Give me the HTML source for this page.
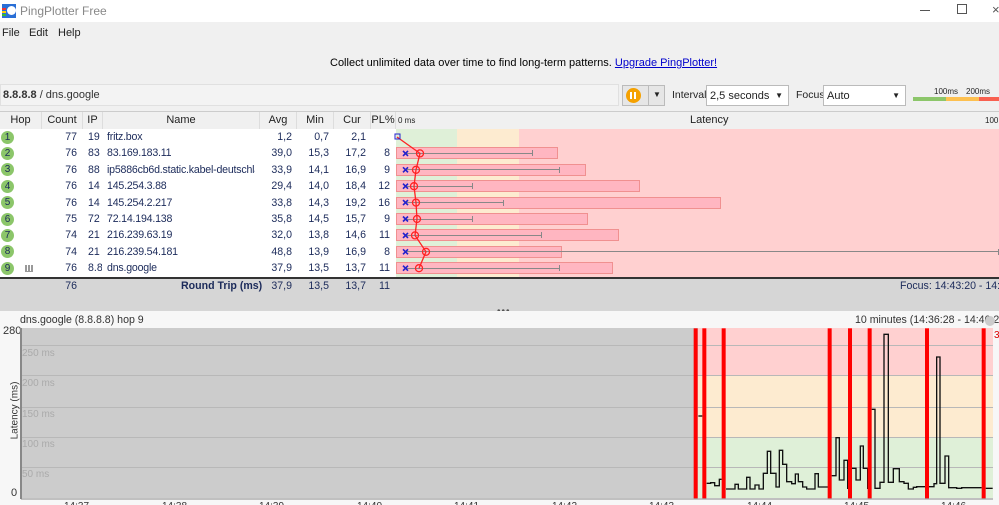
<!DOCTYPE html>
<html><head><meta charset="utf-8"><style>
*{margin:0;padding:0;box-sizing:border-box}
body{width:999px;height:505px;overflow:hidden;background:#f0f0f0;font-family:"Liberation Sans",sans-serif;font-size:11px;color:#222;position:relative;white-space:nowrap}
.a{position:absolute}
.num{text-align:right}
.hdr{top:112px;height:17px;background:#f0f0f0;border-right:1px solid #ddd;text-align:center;line-height:17px;color:#222}
.c{position:absolute;height:16px;line-height:16px;color:#1b2a5a;font-size:10.6px}
.hopc{position:absolute;left:1px;width:13px;height:13px;border-radius:50%;background:#8cc66a;color:#1b2a5a;font-size:10px;text-align:center;line-height:13px}
</style></head><body>
<div class="a" style="left:0;top:0;width:999px;height:22px;background:#fff"></div>
<div class="a" style="left:2px;top:4px;width:14px;height:14px;background:#2a6fd6"><div class="a" style="left:5px;top:2px;width:9px;height:9px;border-radius:50%;background:#fff"></div><div class="a" style="left:0;top:4px;width:4px;height:2px;background:#e33"></div><div class="a" style="left:0;top:7px;width:4px;height:2px;background:#fc0"></div><div class="a" style="left:0;top:10px;width:4px;height:2px;background:#3b3"></div></div>
<div class="a" style="left:20px;top:4px;font-size:12px;color:#888">PingPlotter Free</div>
<div class="a" style="left:920px;top:10px;width:10px;height:1px;background:#555"></div>
<div class="a" style="left:957px;top:4px;width:10px;height:10px;border:1px solid #555"></div>
<div class="a" style="left:992px;top:2px;font-size:13px;color:#555">×</div>
<div class="a" style="left:2px;top:27px">File</div><div class="a" style="left:29px;top:27px">Edit</div><div class="a" style="left:58px;top:27px">Help</div>
<div class="a" style="left:330px;top:57px;font-size:11px;color:#000">Collect unlimited data over time to find long-term patterns. <span style="color:#00c;text-decoration:underline">Upgrade PingPlotter!</span></div>
<div class="a" style="left:0;top:84px;width:619px;height:22px;background:#f3f3f3;border:1px solid #e0e0e0"></div>
<div class="a" style="left:3px;top:89px;color:#333"><b>8.8.8.8</b> / dns.google</div>
<div class="a" style="left:622px;top:85px;width:43px;height:21px;background:#e6e6e6;border:1px solid #bbb"></div>
<div class="a" style="left:626px;top:88px;width:15px;height:15px;border-radius:50%;background:#f5a100"><div class="a" style="left:4px;top:4px;width:2px;height:7px;background:#fff"></div><div class="a" style="left:8px;top:4px;width:2px;height:7px;background:#fff"></div></div>
<div class="a" style="left:648px;top:85px;width:1px;height:21px;background:#bbb"></div>
<div class="a" style="left:653px;top:90px;font-size:8px">▼</div>
<div class="a" style="left:672px;top:89px;font-size:10.5px">Interval</div>
<div class="a" style="left:706px;top:85px;width:83px;height:21px;background:#fff;border:1px solid #bbb;padding:4px 3px">2,5 seconds<span style="position:absolute;right:5px;top:5px;font-size:8px">▼</span></div>
<div class="a" style="left:796px;top:89px;font-size:10.5px">Focus</div>
<div class="a" style="left:823px;top:85px;width:83px;height:21px;background:#fff;border:1px solid #bbb;padding:4px 3px">Auto<span style="position:absolute;right:5px;top:5px;font-size:8px">▼</span></div>
<div class="a" style="left:934px;top:87px;font-size:8px">100ms</div><div class="a" style="left:966px;top:87px;font-size:8px">200ms</div>
<div class="a" style="left:913px;top:97px;width:33px;height:4px;background:#8cc66a"></div><div class="a" style="left:946px;top:97px;width:33px;height:4px;background:#fdc050"></div><div class="a" style="left:979px;top:97px;width:20px;height:4px;background:#f86050"></div>
<div class="a" style="left:0;top:111px;width:999px;height:1px;background:#ccc"></div>
<div class="a hdr" style="left:0;width:42px">Hop</div>
<div class="a hdr" style="left:42px;width:41px">Count</div>
<div class="a hdr" style="left:83px;width:20px">IP</div>
<div class="a hdr" style="left:103px;width:157px">Name</div>
<div class="a hdr" style="left:260px;width:37px">Avg</div>
<div class="a hdr" style="left:297px;width:37px">Min</div>
<div class="a hdr" style="left:334px;width:37px">Cur</div>
<div class="a hdr" style="left:371px;width:25px">PL%</div>
<div class="a" style="left:396px;top:112px;width:603px;height:17px;background:#f0f0f0"></div>
<div class="a" style="left:398px;top:116px;font-size:8px">0 ms</div>
<div class="a" style="left:690px;top:114px">Latency</div>
<div class="a" style="left:985px;top:116px;font-size:8px">100</div>
<div class="a" style="left:0;top:129px;width:396px;height:148px;background:#fff"></div>
<div class="a" style="left:396px;top:129px;width:61px;height:148px;background:#dff0d8"></div>
<div class="a" style="left:457px;top:129px;width:62px;height:148px;background:#fdebd0"></div>
<div class="a" style="left:519px;top:129px;width:480px;height:148px;background:#ffd0d0"></div>
<div id="rows"></div>
<div class="a" style="left:0;top:277px;width:999px;height:2px;background:#333"></div>
<div class="a" style="left:0;top:279px;width:999px;height:32px;background:#d6d6d6"></div>
<div class="a" style="left:0;top:279px;width:999px;height:16px;color:#1b2a5a;line-height:14px;font-size:10.6px">
<span class="a num" style="left:42px;width:35px">76</span>
<span class="a" style="left:181px;font-weight:bold">Round Trip (ms)</span>
<span class="a num" style="left:260px;width:32px">37,9</span><span class="a num" style="left:297px;width:32px">13,5</span><span class="a num" style="left:334px;width:32px">13,7</span><span class="a num" style="left:371px;width:19px">11</span>
<span class="a" style="left:900px">Focus: 14:43:20 - 14:46</span></div>
<div class="a" style="left:497px;top:306px;font-size:10px;color:#555;letter-spacing:1px">•••</div>
<div class="a" style="left:0;top:311px;width:999px;height:194px;background:#f7f7f7"></div>
<div class="a" style="left:20px;top:314px;color:#333;font-size:10.6px">dns.google (8.8.8.8) hop 9</div>
<div class="a" style="left:855px;top:314px;color:#333;font-size:10.6px">10 minutes (14:36:28 - 14:46:28)</div>
<div class="a" style="left:985px;top:316px;width:10px;height:10px;border-radius:50%;background:#ccc"></div>
<div class="a" style="left:3px;top:325px;color:#333">280</div>
<div class="a" style="left:11px;top:487px;color:#333">0</div>
<div class="a" style="left:-14px;top:405px;transform:rotate(-90deg);color:#333;font-size:10px">Latency (ms)</div>
<svg class="a" style="left:0;top:311px" width="999" height="194">
<rect x="21" y="17" width="677" height="170" fill="#cccccc"/>
<rect x="698" y="17" width="295" height="48" fill="#ffd0d0"/>
<rect x="698" y="65" width="295" height="61" fill="#fdebd0"/>
<rect x="698" y="126" width="295" height="61" fill="#dff0d8"/>
<g stroke="#b8b8b8" stroke-width="1"><line x1="21" y1="34.5" x2="993" y2="34.5"/><line x1="21" y1="64.5" x2="993" y2="64.5"/><line x1="21" y1="96.5" x2="993" y2="96.5"/><line x1="21" y1="126.5" x2="993" y2="126.5"/><line x1="21" y1="156.5" x2="993" y2="156.5"/></g>
<line x1="21" y1="17" x2="21" y2="188" stroke="#888" stroke-width="2"/>
<line x1="21" y1="188" x2="993" y2="188" stroke="#888"/>
<g font-size="10" fill="#aaa" font-family="Liberation Sans"><text x="22" y="45">250 ms</text><text x="22" y="75">200 ms</text><text x="22" y="106">150 ms</text><text x="22" y="136">100 ms</text><text x="22" y="166">50 ms</text></g>
<g font-size="10" fill="#333" font-family="Liberation Sans"><text x="64" y="198">14:37</text><text x="162" y="198">14:38</text><text x="259" y="198">14:39</text><text x="357" y="198">14:40</text><text x="454" y="198">14:41</text><text x="552" y="198">14:42</text><text x="649" y="198">14:43</text><text x="747" y="198">14:44</text><text x="844" y="198">14:45</text><text x="941" y="198">14:46</text></g>
<g fill="#d00" font-size="10"><text x="994" y="27">3</text></g>
<svg x="680" y="-1" width="319" height="195" viewBox="0 0 957 585">
<g fill="none" stroke="#111" stroke-width="4">
<path d="M55 318H67"/>
<path d="M80 520H92V518H104V527H118V508H125"/>
<path d="M138 537H165V523H175V537H200V502H210V537H225V525H237V537H250V490H262V424H272V490H288V531H298V421H308V463H320V515H335V521H346V492H355V515H368V531H380V537H405V491H415V531H444"/>
<path d="M455 497H468V383H478V510H492V451H503V537"/>
<path d="M515 475H528V510H541V408H550V475H563V537"/>
<path d="M575 298H585V535H600V517H612V73H625V517H640V476H658V515H672V520H685V537H700V532H710V530H735"/>
<path d="M747 530H762V521H770V141H780V520H795V438H806V533H830V535H845V533H905"/>
<path d="M917 535H938"/>
</g>
<g fill="#f00"><rect x="41" y="55" width="12" height="510"/><rect x="67" y="55" width="12" height="510"/><rect x="125" y="55" width="12" height="510"/><rect x="443" y="55" width="12" height="510"/><rect x="504" y="55" width="12" height="510"/><rect x="563" y="55" width="12" height="510"/><rect x="735" y="55" width="12" height="510"/><rect x="905" y="55" width="12" height="510"/></g>
</svg>
</svg>
<script>
var d=[[77,19,"fritz.box","1,2","0,7","2,1","",0,0,0],[76,83,"83.169.183.11","39,0","15,3","17,2","8",558,420,533],[76,88,"ip5886cb6d.static.kabel-deutschla","33,9","14,1","16,9","9",586,416,560],[76,14,"145.254.3.88","29,4","14,0","18,4","12",640,414,473],[76,14,"145.254.2.217","33,8","14,3","19,2","16",721,416,504],[75,72,"72.14.194.138","35,8","14,5","15,7","9",588,417,473],[74,21,"216.239.63.19","32,0","13,8","14,6","11",619,415,542],[74,21,"216.239.54.181","48,8","13,9","16,9","8",562,426,999],[76,"8.8","dns.google","37,9","13,5","13,7","11",613,419,560]];
var h="",pts="397,137 ";
d.forEach(function(r,i){var t=129+i*16.4,cy=t+8;
h+='<div class="hopc" style="top:'+(t+1.5)+'px">'+(i+1)+'</div>';
if(i==8)h+='<div class="a" style="left:25px;top:'+(t+5)+'px;width:8px;height:7px;border-bottom:1px solid #999;background:linear-gradient(90deg,#999 2px,transparent 2px,transparent 3px,#999 3px,#999 5px,transparent 5px,transparent 6px,#999 6px)"></div>';
h+='<div class="c num" style="top:'+t+'px;left:42px;width:35px">'+r[0]+'</div><div class="c" style="top:'+t+'px;left:88px;width:14px;overflow:hidden">'+r[1]+'</div><div class="c" style="top:'+t+'px;left:107px;width:148px;overflow:hidden;letter-spacing:-0.2px">'+r[2]+'</div><div class="c num" style="top:'+t+'px;left:260px;width:32px">'+r[3]+'</div><div class="c num" style="top:'+t+'px;left:297px;width:32px">'+r[4]+'</div><div class="c num" style="top:'+t+'px;left:334px;width:32px">'+r[5]+'</div><div class="c num" style="top:'+t+'px;left:371px;width:19px">'+r[6]+'</div>';
if(i>0){h+='<div class="a" style="left:396px;top:'+(t+2)+'px;width:'+(r[7]-396)+'px;height:12px;background:#ffb6c1;border:1px solid #f09090"></div><div class="a" style="left:405px;top:'+(cy-0.5)+'px;width:'+(r[9]-405)+'px;height:1px;background:#888"></div><div class="a" style="left:'+(r[9]-1)+'px;top:'+(cy-3)+'px;width:1px;height:6px;background:#888"></div>';pts+=r[8]+','+cy+' ';}
});
h+='<svg class="a" style="left:0;top:0" width="999" height="280"><polyline points="'+pts+'" fill="none" stroke="#f22" stroke-width="1.3"/>';
pts.trim().split(' ').forEach(function(p,i){var q=p.split(',');if(i>0){var y=+q[1];h+='<path d="M403 '+(y-2.5)+'l5 5m0 -5l-5 5" stroke="#22c" stroke-width="1.6"/><circle cx="'+q[0]+'" cy="'+q[1]+'" r="3.5" fill="none" stroke="#f22" stroke-width="1.3"/>';}else h+='<rect x="395" y="134" width="5" height="5" fill="none" stroke="#22c"/>';});
h+='</svg>';
document.getElementById('rows').innerHTML=h;
</script>
</body></html>
